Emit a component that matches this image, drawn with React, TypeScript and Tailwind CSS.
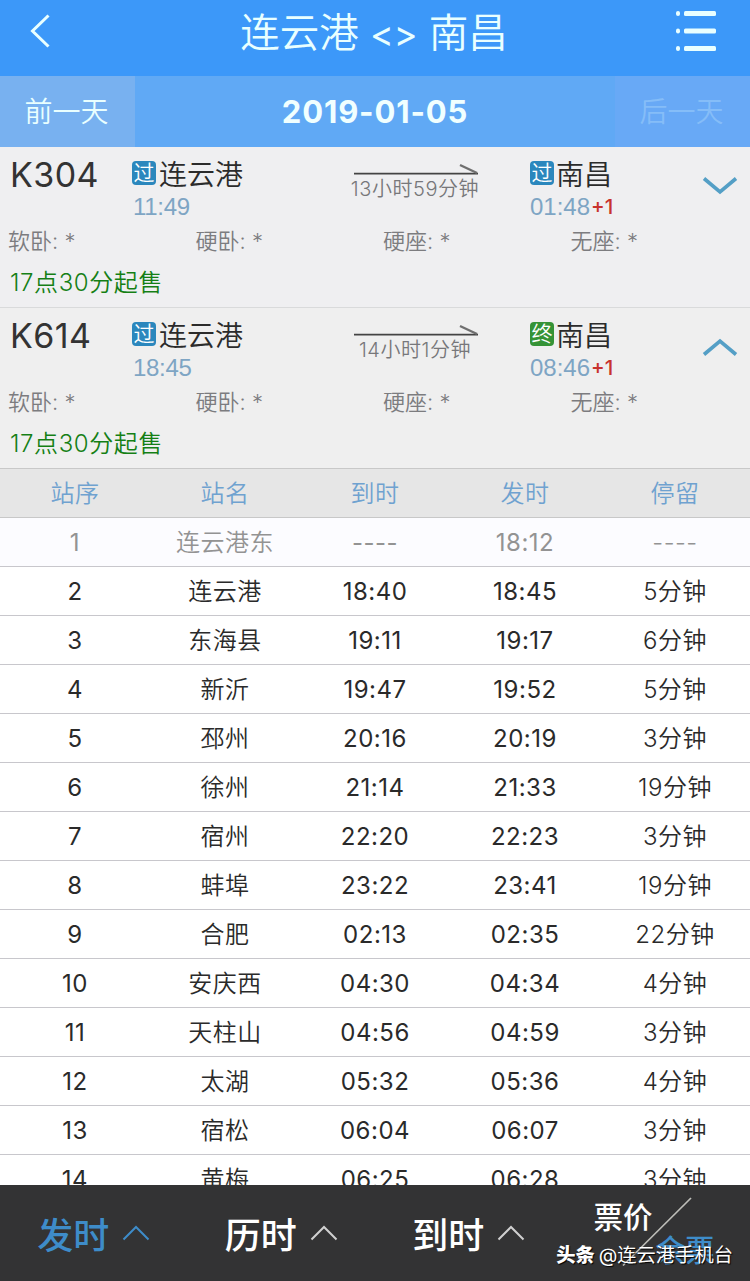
import React from 'react';
import clsx from 'clsx';

interface Stop {
  no: number;
  name: string;
  arrive: string;
  depart: string;
  stay: string;
}

interface Train {
  code: string;
  duration: string;
  from: string;
  fromTime: string;
  to: string;
  toTime: string;
  toType: 'pass' | 'end';
  expanded: boolean;
}

const trains: Train[] = [
  {
    code: 'K304',
    duration: '13小时59分钟',
    from: '连云港',
    fromTime: '11:49',
    to: '南昌',
    toTime: '01:48',
    toType: 'pass',
    expanded: false,
  },
  {
    code: 'K614',
    duration: '14小时1分钟',
    from: '连云港',
    fromTime: '18:45',
    to: '南昌',
    toTime: '08:46',
    toType: 'end',
    expanded: true,
  },
];

const seats = ['软卧', '硬卧', '硬座', '无座'];

const columns = ['站序', '站名', '到时', '发时', '停留'];

const stops: Stop[] = [
  { no: 1, name: '连云港东', arrive: '----', depart: '18:12', stay: '----' },
  { no: 2, name: '连云港', arrive: '18:40', depart: '18:45', stay: '5分钟' },
  { no: 3, name: '东海县', arrive: '19:11', depart: '19:17', stay: '6分钟' },
  { no: 4, name: '新沂', arrive: '19:47', depart: '19:52', stay: '5分钟' },
  { no: 5, name: '邳州', arrive: '20:16', depart: '20:19', stay: '3分钟' },
  { no: 6, name: '徐州', arrive: '21:14', depart: '21:33', stay: '19分钟' },
  { no: 7, name: '宿州', arrive: '22:20', depart: '22:23', stay: '3分钟' },
  { no: 8, name: '蚌埠', arrive: '23:22', depart: '23:41', stay: '19分钟' },
  { no: 9, name: '合肥', arrive: '02:13', depart: '02:35', stay: '22分钟' },
  { no: 10, name: '安庆西', arrive: '04:30', depart: '04:34', stay: '4分钟' },
  { no: 11, name: '天柱山', arrive: '04:56', depart: '04:59', stay: '3分钟' },
  { no: 12, name: '太湖', arrive: '05:32', depart: '05:36', stay: '4分钟' },
  { no: 13, name: '宿松', arrive: '06:04', depart: '06:07', stay: '3分钟' },
  { no: 14, name: '黄梅', arrive: '06:25', depart: '06:28', stay: '3分钟' },
];

const StationTag: React.FC<{ type: 'pass' | 'end' }> = ({ type }) => (
  <span
    className={clsx(
      'mb-[3px] flex h-6 w-6 shrink-0 items-center justify-center rounded-[4px] text-[21px] leading-6 text-white',
      type === 'pass' ? 'bg-[#2b87bd]' : 'bg-[#359336]'
    )}
  >
    {type === 'pass' ? '过' : '终'}
  </span>
);

const Header = () => (
  <header className="flex h-[76px] shrink-0 items-start justify-between bg-[#3c98f9] text-[#e9ffff]">
    <svg className="ml-[28px] mt-[13px] h-9 w-6" viewBox="0 0 24 36" fill="none" stroke="currentColor" strokeWidth="3">
      <path d="M20.5 2.5 4.5 18l16 15.5" />
    </svg>
    <h1 className="ml-[22px] mt-[3px] text-[39.5px] leading-[60px] font-[350] whitespace-pre">
      连云港 <span className="text-[36px] font-normal">&lt;&gt;</span> 南昌
    </h1>
    <svg className="mr-[32px] mt-[9px] h-[44px] w-[44px]" viewBox="0 0 44 44" fill="currentColor">
      {[2, 19.5, 37].map((y) => (
        <g key={y}>
          <rect x="2" y={y} width="4" height="5" rx="2" />
          <rect x="10" y={y} width="32" height="5" rx="1.5" />
        </g>
      ))}
    </svg>
  </header>
);

const DateBar = () => (
  <div className="flex h-[71px] shrink-0 bg-[#60a9f5] text-[28px] leading-[71px] font-[350]">
    <div className="w-[135px] bg-[#78b1f0] pt-px pr-[2px] text-center text-[#e9ffff]">前一天</div>
    <div className="flex-1 text-center text-[31px] font-bold tracking-[0.85px] text-[#f0ffff]">2019-01-05</div>
    <div className="w-[135px] bg-[#68a9f6] pt-px pr-[2px] text-center text-[#85bdf8]">后一天</div>
  </div>
);

const TrainCard: React.FC<{ train: Train }> = ({ train }) => (
  <section className={clsx('h-[161px] shrink-0 border-b', train.expanded ? 'border-[#c8c8c8] bg-[#efefef]' : 'border-[#d9dadb] bg-[#efeff1]')}>
    <div className="flex h-[78px]">
      <div className="w-[132px] pl-[10px] pt-[6px] text-[34px] leading-[44px] tracking-[0.4px] text-[#333]">{train.code}</div>
      <div className="w-[218px] pt-[9px]">
        <div className="flex h-9 items-center gap-[3px] pt-px text-[28px] leading-9 font-[350] text-[#2b2b2b]">
          <StationTag type="pass" />
          {train.from}
        </div>
        <div className="pl-[1px] font-[Liberation_Sans] text-[24px] leading-[30px] tracking-[-0.3px] text-[#7ea5c4]">{train.fromTime}</div>
      </div>
      <div className="flex w-[130px] flex-col items-center pt-[16px]">
        <svg className="ml-[2px] h-3 w-[125px]" viewBox="0 0 125 12" fill="none">
          <path d="M0 10.7h124" stroke="#444" strokeWidth="1.7" />
          <path d="m106 2 17 8" stroke="#6f6f6f" strokeWidth="2.4" />
        </svg>
        <span className="text-[20px] leading-[28px] tracking-[0.55px] whitespace-nowrap font-[350] text-[#77777a]">{train.duration}</span>
      </div>
      <div className="ml-[50px] w-[160px] pt-[9px]">
        <div className="flex h-9 items-center gap-[2px] pt-px text-[28px] leading-9 font-[350] text-[#2b2b2b]">
          <StationTag type={train.toType} />
          {train.to}
        </div>
        <div className="flex font-[Liberation_Sans] text-[24px] leading-[30px] text-[#7ea5c4]">
          {train.toTime}
          <span className="ml-px font-[Inter] text-[20.5px] leading-[29px] font-medium text-[#c8322e]">+1</span>
        </div>
      </div>
      <svg className="ml-[12px] mt-[26px] h-6 w-9" viewBox="0 0 36 24" fill="none" stroke="#549fc6" strokeWidth="3.6">
        <path d={train.expanded ? 'M2 20.5 18 7l16 13.5' : 'M2 5.5 18 19 34 5.5'} />
      </svg>
    </div>
    <div className="grid h-[34px] grid-cols-4 text-[22px] leading-[32px] font-[350] text-[#7c7c7f]">
      {seats.map((seat) => (
        <div key={seat} className="pl-[8px]">
          {seat}: *
        </div>
      ))}
    </div>
    <div className="pl-[10px] text-[24px] leading-[48px] tracking-[0.6px] font-[350] text-[#157f15]">17点30分起售</div>
  </section>
);

const StopTable = () => (
  <div className="text-[24px] tracking-[0.5px] leading-[50px] font-[350]">
    <div className="grid h-[49px] grid-cols-5 border-b border-[#c8c8c8] bg-[#e6e6e6] text-center text-[#6fa2d0]">
      {columns.map((column) => (
        <div key={column}>{column}</div>
      ))}
    </div>
    {stops.map((stop) => (
      <div
        key={stop.no}
        className={clsx(
          'grid h-[49px] grid-cols-5 border-b border-[#c8c7cc] text-center',
          stop.no === 1 ? 'bg-[#fcfcff] text-[#939393]' : 'bg-white text-[#2a2a2a]'
        )}
      >
        <div className="font-normal">{stop.no}</div>
        <div>{stop.name}</div>
        <div className="font-normal">{stop.arrive}</div>
        <div className="font-normal">{stop.depart}</div>
        <div>{stop.stay}</div>
      </div>
    ))}
  </div>
);

const SortTab: React.FC<{ label: string; active?: boolean }> = ({ label, active }) => (
  <div className={clsx('flex w-[187.5px] items-center justify-center gap-[13px]', active ? 'text-[#3e8cc9]' : 'text-white')}>
    <span className="pt-[5px] text-[36px] leading-[48px] font-medium">{label}</span>
    <svg className={clsx('h-4 w-7', !active && 'text-[#d0d0d0]')} viewBox="0 0 28 16" fill="none" stroke="currentColor" strokeWidth="2">
      <path d="M1.5 14.5 14 2l12.5 12.5" />
    </svg>
  </div>
);

const BottomBar = () => (
  <footer className="relative flex h-24 shrink-0 bg-[#333334]">
    <SortTab label="发时" active />
    <SortTab label="历时" />
    <SortTab label="到时" />
    <div className="relative w-[187.5px] text-[29.5px] leading-[40px] font-medium">
      <span className="absolute top-[12px] left-[31px] text-white">票价</span>
      <svg className="absolute top-[12px] left-[58px] h-[70px] w-[72px]" viewBox="0 0 72 70" fill="none" stroke="#bdbdb8" strokeWidth="1.7">
        <path d="M2 68.5 70 1" />
      </svg>
      <span className="absolute top-[45px] left-[93px] text-[#3e8cc9]">余票</span>
    </div>
    <div className="absolute right-[17px] bottom-[11px] flex items-center gap-[4px] text-[19.3px] leading-[30px] whitespace-nowrap text-white [text-shadow:1px_1px_1px_#000]">
      <span className="font-black">头条</span>
      <span>@连云港手机台</span>
    </div>
  </footer>
);

export default function App() {
  return (
    <div className="flex h-[1281px] w-[750px] flex-col overflow-hidden bg-white font-[Inter,'Noto_Sans_CJK_SC',sans-serif]">
      <Header />
      <DateBar />
      {trains.map((train) => (
        <TrainCard key={train.code} train={train} />
      ))}
      <div className="min-h-0 flex-1 overflow-hidden">
        <StopTable />
      </div>
      <BottomBar />
    </div>
  );
}
